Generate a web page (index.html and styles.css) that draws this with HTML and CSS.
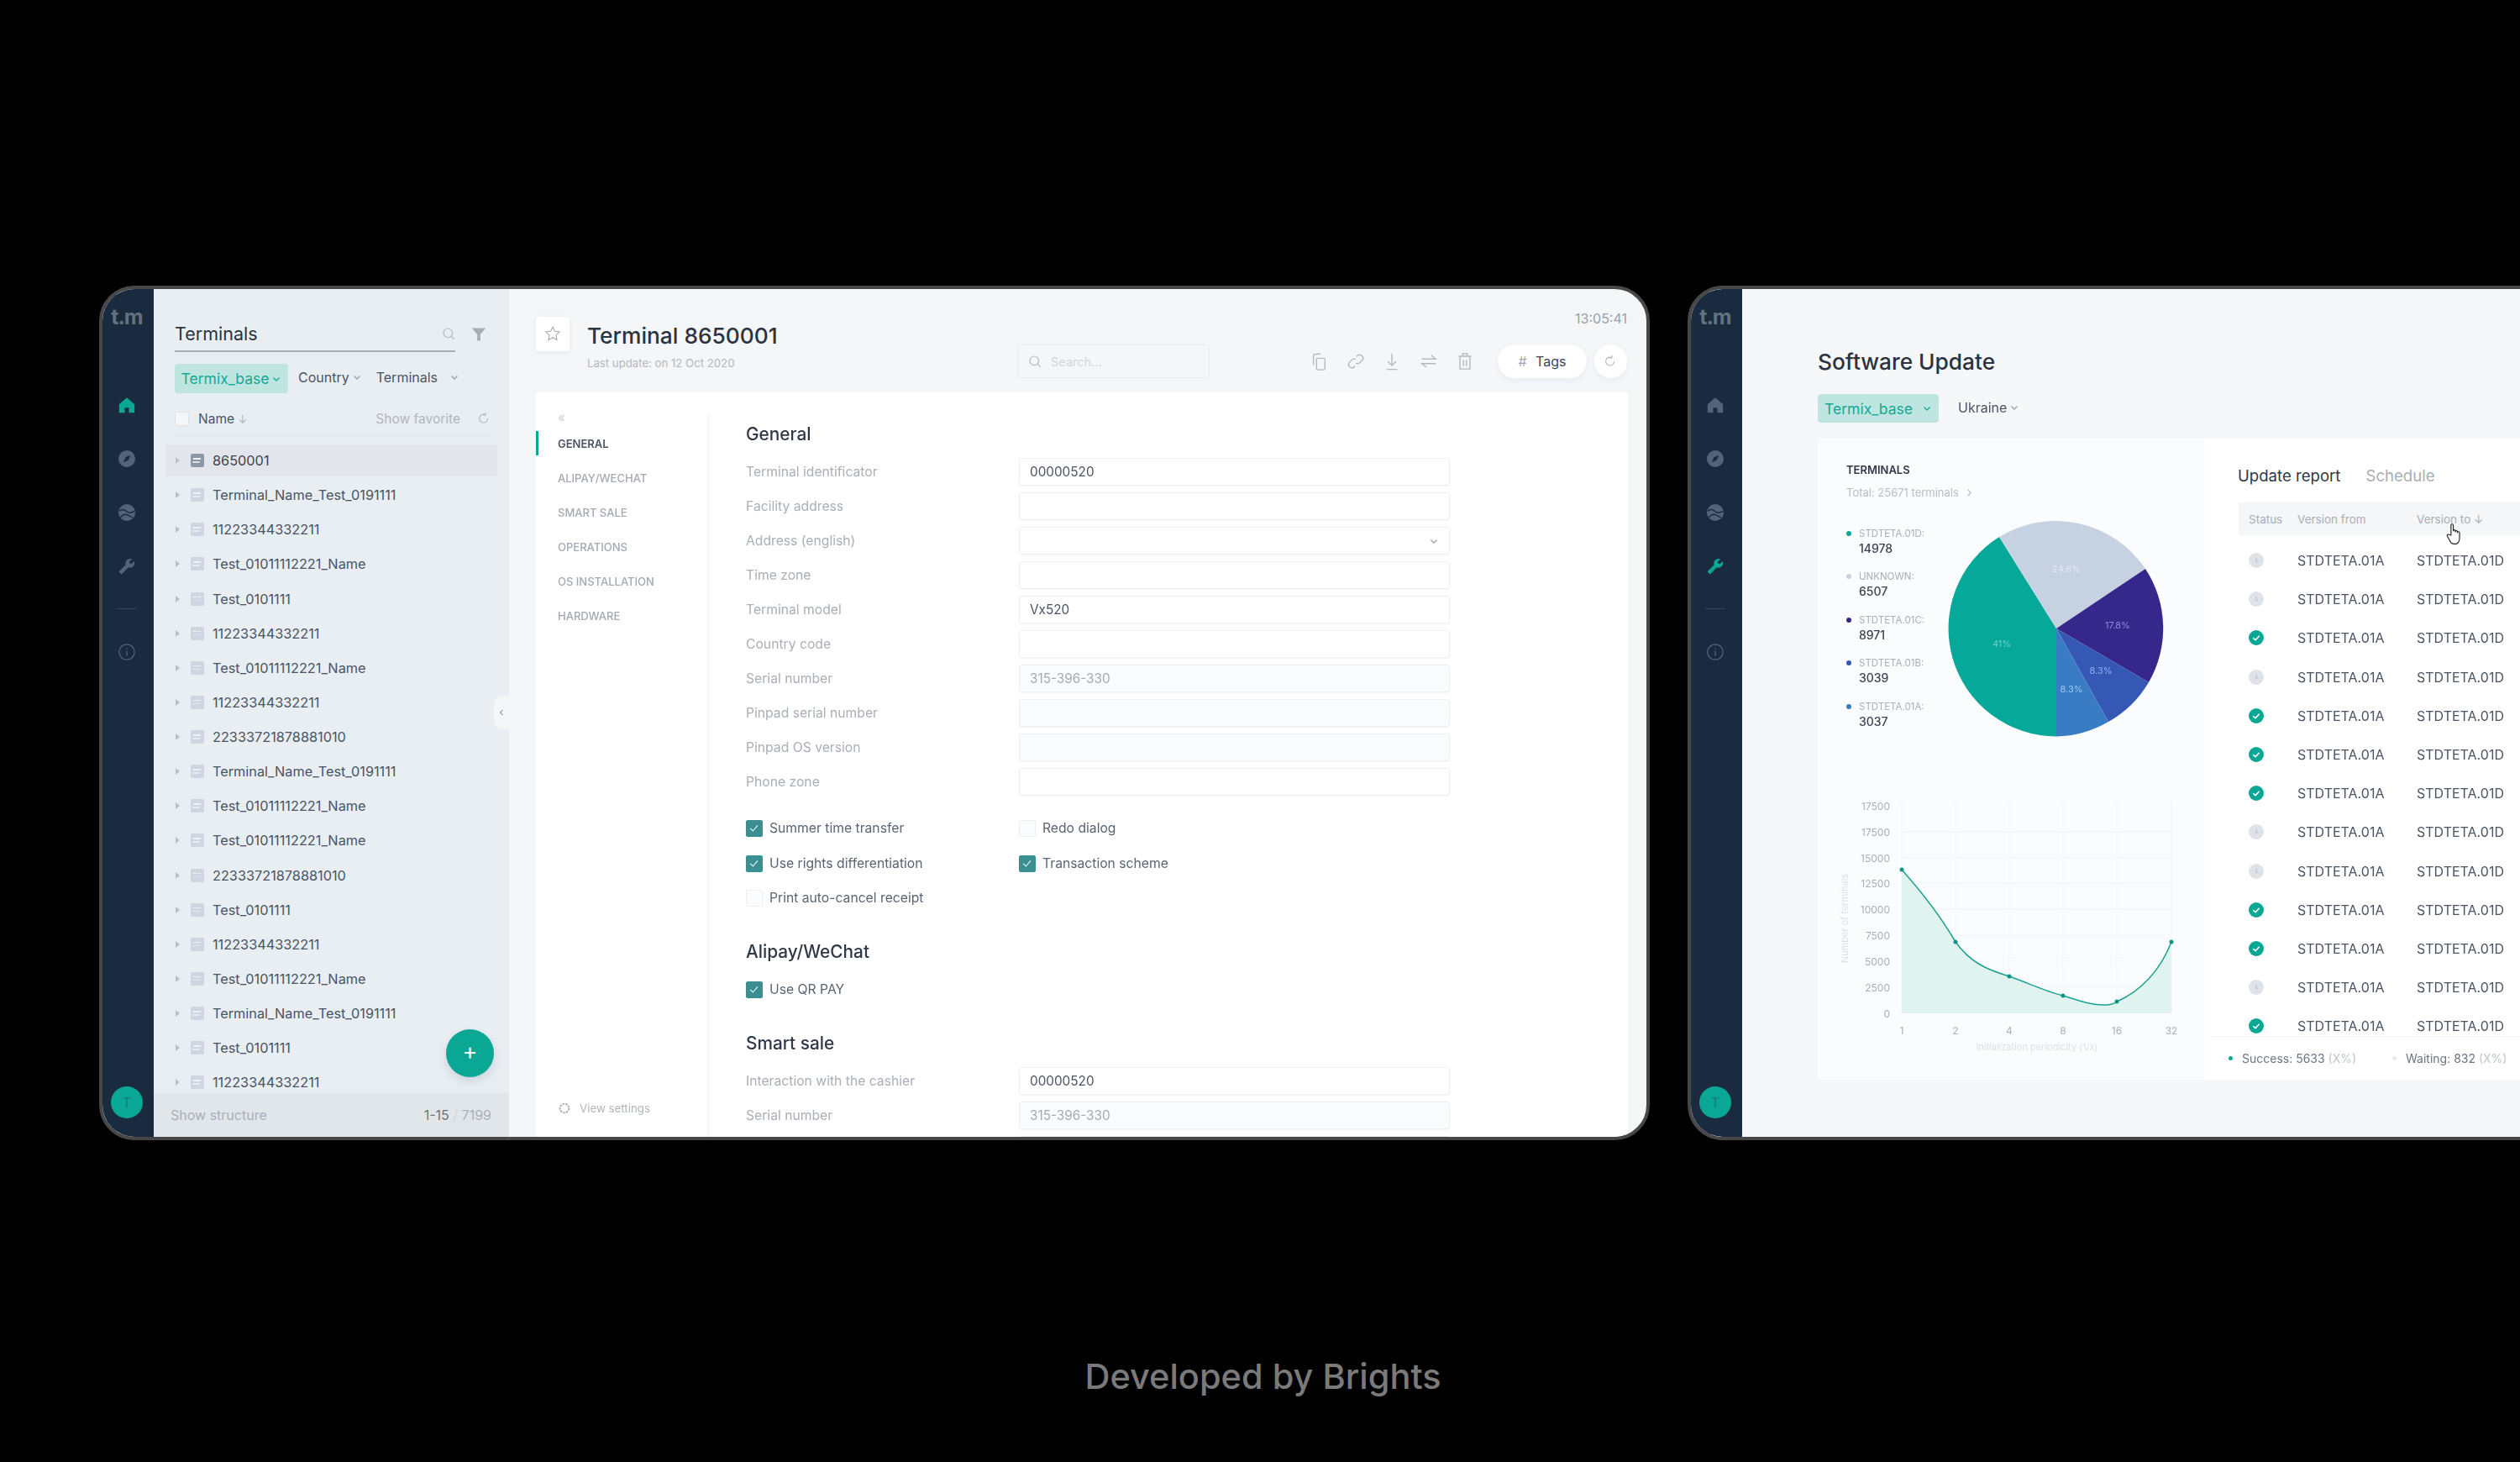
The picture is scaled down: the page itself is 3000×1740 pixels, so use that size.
FILE: index.html
```html
<!DOCTYPE html>
<html lang="en">
<head>
    <meta charset="UTF-8">
    <title>Termix - Developed by Brights</title>
    <link rel="stylesheet" href="styles.css">
</head>
<body>
    <svg class="sprite" width="0" height="0">
        <symbol id="i-home" viewBox="0 0 24 24"><path d="M12 1.5 23 11v12H15v-7H9v7H1V11z" fill="currentColor"/></symbol>
        <symbol id="i-compass" viewBox="0 0 24 24"><circle cx="12" cy="12" r="12" fill="currentColor"/><path d="M17 7l-3 7-7 3 3-7z" fill="#1a2b40"/></symbol>
        <symbol id="i-globe" viewBox="0 0 24 24"><circle cx="12" cy="12" r="12" fill="currentColor"/><path d="M1 10c4-3 7-3 10 0s7 3 12 0M3 19c3-4 6-5 9-4s5 3 8 4" fill="none" stroke="#1a2b40" stroke-width="1.6"/></symbol>
        <symbol id="i-wrench" viewBox="0 0 24 24"><path transform="matrix(-1 0 0 1 24 0)" d="M22.7 19l-9.1-9.1c.9-2.3.4-5-1.5-6.9-2-2-5-2.4-7.4-1.3L9 6 6 9 1.6 4.7C.4 7.1.9 10.1 2.9 12.1c1.9 1.9 4.6 2.4 6.9 1.5l9.1 9.1c.4.4 1 .4 1.4 0l2.3-2.3c.5-.4.5-1.1.1-1.4z" fill="currentColor"/></symbol>
        <symbol id="i-info" viewBox="0 0 24 24"><circle cx="12" cy="12" r="11" fill="none" stroke="currentColor" stroke-width="1.5"/><path d="M12 10.5V17.5M12 6.5v1.6" stroke="currentColor" stroke-width="1.6" fill="none"/></symbol>
        <symbol id="i-search" viewBox="0 0 24 24"><circle cx="11" cy="11" r="8" fill="none" stroke="currentColor" stroke-width="1.8"/><path d="M17 17l5 5" stroke="currentColor" stroke-width="1.8"/></symbol>
        <symbol id="i-chev" viewBox="0 0 12 12"><path d="M2.5 4.5 6 8l3.5-3.5" fill="none" stroke="currentColor" stroke-width="1.4"/></symbol>
        <symbol id="i-refresh" viewBox="0 0 24 24"><path d="M19 12a7.5 7.5 0 1 1-4-6.6M15 1.5v4.5h-4.5" fill="none" stroke="currentColor" stroke-width="1.7"/></symbol>
        <symbol id="i-copy" viewBox="0 0 24 24"><rect x="9" y="8" width="11" height="15" rx="2" fill="none" stroke="currentColor" stroke-width="1.5"/><path d="M9 3H7a2 2 0 0 0-2 2v12" fill="none" stroke="currentColor" stroke-width="1.5"/><path d="M9 2.5h5" stroke="currentColor" stroke-width="1.5"/></symbol>
        <symbol id="i-link" viewBox="0 0 24 24"><path d="M13 6l2-2a4.5 4.5 0 0 1 6 6l-4 4a4.5 4.5 0 0 1-5 .5M11 18l-2 2a4.5 4.5 0 0 1-6-6l4-4a4.5 4.5 0 0 1 5-.5" fill="none" stroke="currentColor" stroke-width="1.5"/></symbol>
        <symbol id="i-down" viewBox="0 0 24 24"><path d="M12 2v15M6.5 12l5.5 5.5 5.5-5.5M5 22.5h14" fill="none" stroke="currentColor" stroke-width="1.5"/></symbol>
        <symbol id="i-swap" viewBox="0 0 24 24"><path d="M3 9h18l-6-5M21 15H3l6 5" fill="none" stroke="currentColor" stroke-width="1.5"/></symbol>
        <symbol id="i-trash" viewBox="0 0 24 24"><path d="M4 5.5h16M9 5V2h6v3M5.5 5.5V22h13V5.5M10 10v8M14 10v8" fill="none" stroke="currentColor" stroke-width="1.5"/></symbol>
        <symbol id="i-star" viewBox="0 0 24 24"><path d="M12 2.5l2.9 6.3 6.8.8-5 4.7 1.3 6.8-6-3.4-6 3.4 1.3-6.8-5-4.7 6.8-.8z" fill="none" stroke="currentColor" stroke-width="1.4"/></symbol>
        <symbol id="i-filter" viewBox="0 0 24 24"><path d="M1 2h22l-8.5 10v10h-5V12z" fill="currentColor"/></symbol>
        <symbol id="i-gear" viewBox="0 0 24 24"><circle cx="12" cy="12" r="8" fill="none" stroke="currentColor" stroke-width="3" stroke-dasharray="4 1.5"/></symbol>
        <symbol id="i-check" viewBox="0 0 20 20"><circle cx="10" cy="10" r="10" fill="#0ba795"/><path d="M6 10.5l3 2.5 5-5.5" fill="none" stroke="#fff" stroke-width="1.8"/></symbol>
        <symbol id="i-clock" viewBox="0 0 20 20"><circle cx="10" cy="10" r="10" fill="#dfe2e6"/><path d="M10 6.5v5h2.5" fill="none" stroke="#c2c7cd" stroke-width="1.4"/></symbol>
    </svg>

    <div class="devices">
        <!-- terminal details screen -->
        <section class="device device-terminals">
            <aside class="rail">
                <div class="rail-logo">t.m</div>
                <svg class="rail-icon active"><use href="#i-home"/></svg>
                <svg class="rail-icon"><use href="#i-compass"/></svg>
                <svg class="rail-icon"><use href="#i-globe"/></svg>
                <svg class="rail-icon"><use href="#i-wrench"/></svg>
                <div class="rail-line"></div>
                <svg class="rail-icon"><use href="#i-info"/></svg>
                <div class="avatar">T</div>
            </aside>

            <div class="panel">
                <div class="panel-title">
                    <div class="panel-title-box">
                        <span>Terminals</span>
                        <svg class="ico-16"><use href="#i-search"/></svg>
                    </div>
                    <svg class="ico-filter"><use href="#i-filter"/></svg>
                </div>
                <div class="filters">
                    <div class="pill">Termix_base<svg class="chev"><use href="#i-chev"/></svg></div>
                    <div class="select select-country">Country<svg class="chev"><use href="#i-chev"/></svg></div>
                    <div class="select">Terminals<svg class="chev chev-far"><use href="#i-chev"/></svg></div>
                </div>
                <div class="list-head">
                    <span class="box"></span>
                    <span class="list-name">Name <em>&#8595;</em></span>
                    <span class="list-fav">Show favorite</span>
                    <svg class="ico-16"><use href="#i-refresh"/></svg>
                </div>
                <ul class="rows">
                    <li class="row selected"><i class="caret"></i><i class="doc"></i>8650001</li>
                    <li class="row"><i class="caret"></i><i class="doc"></i>Terminal_Name_Test_0191111</li>
                    <li class="row"><i class="caret"></i><i class="doc"></i>11223344332211</li>
                    <li class="row"><i class="caret"></i><i class="doc"></i>Test_01011112221_Name</li>
                    <li class="row"><i class="caret"></i><i class="doc"></i>Test_0101111</li>
                    <li class="row"><i class="caret"></i><i class="doc"></i>11223344332211</li>
                    <li class="row"><i class="caret"></i><i class="doc"></i>Test_01011112221_Name</li>
                    <li class="row"><i class="caret"></i><i class="doc"></i>11223344332211</li>
                    <li class="row"><i class="caret"></i><i class="doc"></i>22333721878881010</li>
                    <li class="row"><i class="caret"></i><i class="doc"></i>Terminal_Name_Test_0191111</li>
                    <li class="row"><i class="caret"></i><i class="doc"></i>Test_01011112221_Name</li>
                    <li class="row"><i class="caret"></i><i class="doc"></i>Test_01011112221_Name</li>
                    <li class="row"><i class="caret"></i><i class="doc"></i>22333721878881010</li>
                    <li class="row"><i class="caret"></i><i class="doc"></i>Test_0101111</li>
                    <li class="row"><i class="caret"></i><i class="doc"></i>11223344332211</li>
                    <li class="row"><i class="caret"></i><i class="doc"></i>Test_01011112221_Name</li>
                    <li class="row"><i class="caret"></i><i class="doc"></i>Terminal_Name_Test_0191111</li>
                    <li class="row"><i class="caret"></i><i class="doc"></i>Test_0101111</li>
                    <li class="row"><i class="caret"></i><i class="doc"></i>11223344332211</li>
                </ul>
                <div class="panel-foot">
                    <span>Show structure</span>
                    <span class="count"><b>1-15</b> <s>/</s> 7199</span>
                </div>
                <div class="fab">+</div>
                <div class="collapse-tab"><svg viewBox="0 0 12 12"><path d="M7.5 3 4.5 6l3 3" fill="none" stroke="#9aa2ac" stroke-width="1.3"/></svg></div>
            </div>

            <main class="main">
                <header class="main-head">
                    <div class="star"><svg><use href="#i-star"/></svg></div>
                    <div class="head-text">
                        <h1>Terminal 8650001</h1>
                        <p>Last update: on 12 Oct 2020</p>
                    </div>
                    <div class="head-right">
                        <div class="clock">13:05:41</div>
                        <div class="toolbar">
                            <div class="search"><svg class="ico-16"><use href="#i-search"/></svg>Search...</div>
                            <div class="tools">
                                <svg><use href="#i-copy"/></svg>
                                <svg><use href="#i-link"/></svg>
                                <svg><use href="#i-down"/></svg>
                                <svg><use href="#i-swap"/></svg>
                                <svg><use href="#i-trash"/></svg>
                            </div>
                            <div class="tags"><span>#</span> Tags</div>
                            <div class="round-btn"><svg class="ico-16"><use href="#i-refresh"/></svg></div>
                        </div>
                    </div>
                </header>

                <div class="card">
                    <nav class="side-nav">
                        <div class="side-collapse">&laquo;</div>
                        <a class="current">GENERAL</a>
                        <a>ALIPAY/WECHAT</a>
                        <a>SMART SALE</a>
                        <a>OPERATIONS</a>
                        <a>OS INSTALLATION</a>
                        <a>HARDWARE</a>
                        <div class="view-settings"><svg><use href="#i-gear"/></svg>View settings</div>
                    </nav>
                    <div class="form">
                        <h2 class="first">General</h2>
                        <div class="fields">
                            <label>Terminal identificator</label><div class="input">00000520</div>
                            <label>Facility address</label><div class="input"></div>
                            <label>Address (english)</label><div class="input input-select"><svg class="chev"><use href="#i-chev"/></svg></div>
                            <label>Time zone</label><div class="input"></div>
                            <label>Terminal model</label><div class="input">Vx520</div>
                            <label>Country code</label><div class="input"></div>
                            <label>Serial number</label><div class="input off">315-396-330</div>
                            <label>Pinpad serial number</label><div class="input off"></div>
                            <label>Pinpad OS version</label><div class="input off"></div>
                            <label>Phone zone</label><div class="input"></div>
                        </div>
                        <div class="checks">
                            <div class="check on">Summer time transfer</div>
                            <div class="check">Redo dialog</div>
                            <div class="check on">Use rights differentiation</div>
                            <div class="check on">Transaction scheme</div>
                            <div class="check">Print auto-cancel receipt</div>
                        </div>
                        <h2>Alipay/WeChat</h2>
                        <div class="checks">
                            <div class="check on">Use QR PAY</div>
                        </div>
                        <h2>Smart sale</h2>
                        <div class="fields">
                            <label>Interaction with the cashier</label><div class="input">00000520</div>
                            <label>Serial number</label><div class="input off">315-396-330</div>
                            <label></label><div class="input off"></div>
                        </div>
                    </div>
                </div>
            </main>
        </section>

        <!-- software update screen -->
        <section class="device device-update">
            <aside class="rail">
                <div class="rail-logo">t.m</div>
                <svg class="rail-icon"><use href="#i-home"/></svg>
                <svg class="rail-icon"><use href="#i-compass"/></svg>
                <svg class="rail-icon"><use href="#i-globe"/></svg>
                <svg class="rail-icon active"><use href="#i-wrench"/></svg>
                <div class="rail-line"></div>
                <svg class="rail-icon"><use href="#i-info"/></svg>
                <div class="avatar">T</div>
            </aside>

            <main class="update">
                <h1>Software Update</h1>
                <div class="filters update-filters">
                    <div class="pill">Termix_base<svg class="chev"><use href="#i-chev"/></svg></div>
                    <div class="select">Ukraine<svg class="chev"><use href="#i-chev"/></svg></div>
                </div>
                <div class="update-cards">
                    <section class="stats">
                        <h3>TERMINALS</h3>
                        <p class="total">Total: 25671 terminals <span>&rsaquo;</span></p>
                        <div class="pie-row">
                            <ul class="legend">
                                <li><i class="c-teal"></i><span>STDTETA.01D:</span><b>14978</b></li>
                                <li><i class="c-grey"></i><span>UNKNOWN:</span><b>6507</b></li>
                                <li><i class="c-purple"></i><span>STDTETA.01C:</span><b>8971</b></li>
                                <li><i class="c-blue"></i><span>STDTETA.01B:</span><b>3039</b></li>
                                <li><i class="c-sky"></i><span>STDTETA.01A:</span><b>3037</b></li>
                            </ul>
                            <svg class="pie" viewBox="0 0 258 258">
                                <path d="M129 129V257.5A128.5 128.5 0 0 1 61 20z" fill="#05a899"/>
                                <path d="M129 129L61 20A128.5 128.5 0 0 1 235 58z" fill="#c6d1e2"/>
                                <path d="M129 129L235 58A128.5 128.5 0 0 1 239 193z" fill="#35288a"/>
                                <path d="M129 129L239 193A128.5 128.5 0 0 1 191 240z" fill="#3558b5"/>
                                <path d="M129 129L191 240A128.5 128.5 0 0 1 129 257.5z" fill="#3a7cc4"/>
                                <g class="pie-labels">
                                    <text x="141" y="62" fill="#e4e9f1">24.6%</text>
                                    <text x="202" y="129" fill="#8f86e0">17.8%</text>
                                    <text x="182" y="183" fill="#8fb0ee">8.3%</text>
                                    <text x="147" y="205" fill="#9cc8ef">8.3%</text>
                                    <text x="64" y="151" fill="#66d3c6">41%</text>
                                </g>
                            </svg>
                        </div>
                        <svg class="line-chart" viewBox="0 0 440 320">
                            <g class="grid">
                                <path d="M84 50H405M84 81H405M84 111H405M84 142H405M84 173H405M84 204H405M84 235H405"/>
                                <path d="M84 13V266M148 13V266M212 13V266M276 13V266M340 13V266M405 13V266"/>
                            </g>
                            <path d="M84 95C108 122 130 150 148 181C165 205 185 214 212 222C235 230 255 240 276 245C295 251 312 257 328 256C334 255.5 338 254 340 252C368 240 392 215 405 181V266H84Z" fill="#dff3ef"/>
                            <path d="M84 95C108 122 130 150 148 181C165 205 185 214 212 222C235 230 255 240 276 245C295 251 312 257 328 256C334 255.5 338 254 340 252C368 240 392 215 405 181" fill="none" stroke="#1aa28f" stroke-width="1.5"/>
                            <g fill="#0f9583">
                                <circle cx="84" cy="95" r="2.5"/><circle cx="148" cy="181" r="2.5"/><circle cx="212" cy="222" r="2.5"/>
                                <circle cx="276" cy="245" r="2.5"/><circle cx="340" cy="252" r="2.5"/><circle cx="405" cy="181" r="2.5"/>
                            </g>
                            <g class="y-labels">
                                <text x="70" y="24">17500</text><text x="70" y="55">17500</text><text x="70" y="86">15000</text>
                                <text x="70" y="116">12500</text><text x="70" y="147">10000</text><text x="70" y="178">7500</text>
                                <text x="70" y="209">5000</text><text x="70" y="240">2500</text><text x="70" y="271">0</text>
                            </g>
                            <g class="x-labels">
                                <text x="84" y="291">1</text><text x="148" y="291">2</text><text x="212" y="291">4</text>
                                <text x="276" y="291">8</text><text x="340" y="291">16</text><text x="405" y="291">32</text>
                            </g>
                            <text class="axis-title" x="245" y="310">Initialization periodicity (1/x)</text>
                            <text class="axis-title" transform="translate(20 153) rotate(-90)">Number of terminals</text>
                        </svg>
                    </section>

                    <section class="report">
                        <div class="tabs"><span class="tab-on">Update report</span><span>Schedule</span></div>
                        <div class="table-head">
                            <span>Status</span><span>Version from</span><span>Version to &#8595;</span>
                            <svg class="hand" viewBox="0 0 20 26"><path d="M6.5 14.5V3a1.3 1.3 0 0 1 2.6 0V9.5a1.2 1.2 0 0 1 2.4 0v1a1.2 1.2 0 0 1 2.4 0v1a1.2 1.2 0 0 1 2.4 0V18c0 3.5-2 6.5-4.5 6.5H9.5c-2 0-3-1-4-3L2.2 15.5c-.8-1.5 1-2.6 2.2-1.5z" fill="#fff" stroke="#222" stroke-width="1.1" stroke-linejoin="round"/></svg>
                        </div>
                        <div class="table-body">
                            <div class="t-row"><svg><use href="#i-clock"/></svg><span>STDTETA.01A</span><span>STDTETA.01D</span></div>
                            <div class="t-row"><svg><use href="#i-clock"/></svg><span>STDTETA.01A</span><span>STDTETA.01D</span></div>
                            <div class="t-row"><svg><use href="#i-check"/></svg><span>STDTETA.01A</span><span>STDTETA.01D</span></div>
                            <div class="t-row"><svg><use href="#i-clock"/></svg><span>STDTETA.01A</span><span>STDTETA.01D</span></div>
                            <div class="t-row"><svg><use href="#i-check"/></svg><span>STDTETA.01A</span><span>STDTETA.01D</span></div>
                            <div class="t-row"><svg><use href="#i-check"/></svg><span>STDTETA.01A</span><span>STDTETA.01D</span></div>
                            <div class="t-row"><svg><use href="#i-check"/></svg><span>STDTETA.01A</span><span>STDTETA.01D</span></div>
                            <div class="t-row"><svg><use href="#i-clock"/></svg><span>STDTETA.01A</span><span>STDTETA.01D</span></div>
                            <div class="t-row"><svg><use href="#i-clock"/></svg><span>STDTETA.01A</span><span>STDTETA.01D</span></div>
                            <div class="t-row"><svg><use href="#i-check"/></svg><span>STDTETA.01A</span><span>STDTETA.01D</span></div>
                            <div class="t-row"><svg><use href="#i-check"/></svg><span>STDTETA.01A</span><span>STDTETA.01D</span></div>
                            <div class="t-row"><svg><use href="#i-clock"/></svg><span>STDTETA.01A</span><span>STDTETA.01D</span></div>
                            <div class="t-row"><svg><use href="#i-check"/></svg><span>STDTETA.01A</span><span>STDTETA.01D</span></div>
                        </div>
                        <div class="report-foot">
                            <i class="dot-ok"></i><span class="foot-ok">Success: 5633 <em>(X%)</em></span>
                            <i class="dot-wait"></i><span>Waiting: 832 <em>(X%)</em></span>
                        </div>
                    </section>
                </div>
            </main>
        </section>
    </div>

    <div class="caption">Developed by Brights</div>
</body>
</html>
```

FILE: styles.css
```css
* {box-sizing: border-box;}

html, body {
    margin: 0;
    height: 1740px;
    overflow: hidden;
}

body {
    width: 3000px;
    background-color: #000;
    font-family: Inter, "Noto Sans", sans-serif;
    color: #4a5463;
}

h1, h2, h3, p, ul {
    margin: 0;
    padding: 0;
}

ul {list-style: none;}

.sprite {position: absolute;}

.devices {
    display: flex;
    gap: 45px;
    padding: 340px 0 0 118px;
    filter: blur(.5px);
}

.device {
    display: flex;
    flex: none;
    height: 1017px;
    border: 4px solid #474747;
    border-radius: 42px;
    overflow: hidden;
    background-color: #f4f6f8;
}

.device-terminals {width: 1846px;}
.device-update {width: 1100px;}

/* dark rail */
.rail {
    display: flex;
    flex-direction: column;
    align-items: center;
    flex: none;
    width: 61px;
    padding-right: 3px;
    background-color: #1a2b40;
    color: #53637a;
}

.rail-logo {
    margin-top: 18px;
    font-size: 25px;
    line-height: 30px;
    font-weight: 700;
    letter-spacing: -1px;
    color: #64717f;
}

.rail-icon {
    width: 20px;
    height: 20px;
    margin-top: 44px;
}

.rail-logo + .rail-icon {margin-top: 80px;}
.rail-icon.active {color: #0ba795;}

.rail-line {
    width: 24px;
    height: 1px;
    margin-top: 40px;
    background-color: #37475a;
}

.rail-line + .rail-icon {margin-top: 41px;}

.avatar {
    width: 38px;
    height: 38px;
    margin-top: auto;
    margin-bottom: 22px;
    border-radius: 50%;
    background-color: #0ba795;
    color: #0d7f78;
    font-size: 16px;
    line-height: 38px;
    text-align: center;
}

/* terminals list */
.panel {
    position: relative;
    display: flex;
    flex-direction: column;
    flex: none;
    width: 423px;
    background-color: #e9eef3;
}

.panel-title {
    display: flex;
    align-items: center;
    margin: 36px 0 0 25px;
}

.panel-title-box {
    display: flex;
    align-items: center;
    justify-content: space-between;
    width: 334px;
    height: 39px;
    padding-bottom: 4px;
    border-bottom: 2px solid #a9aeb6;
    font-size: 21.5px;
    color: #2a3340;
}

.ico-16 {
    width: 16px;
    height: 16px;
    color: #b3b9c1;
}

.ico-filter {
    width: 18px;
    height: 18px;
    margin: -4px 0 0 19px;
    color: #a8aeb6;
}

.filters {
    display: flex;
    align-items: center;
    margin: 14px 0 0 25px;
}

.pill {
    display: flex;
    align-items: center;
    justify-content: center;
    width: 135px;
    height: 35px;
    border-radius: 4px;
    background-color: #bfe5e0;
    color: #14a995;
    font-size: 17.5px;
}

.select {
    display: flex;
    align-items: center;
    margin-top: -3px;
    font-size: 16px;
    color: #4a5463;
}

.select-country {margin: -3px 17px 0 12px;}

.chev {
    width: 12px;
    height: 12px;
    margin-left: 3px;
    color: #9aa2ac;
}

.pill .chev {color: #14a995;}
.chev-far {margin-left: 14px;}

.list-head {
    display: flex;
    align-items: center;
    height: 29px;
    margin: 22px 22px 0 25px;
    padding: 0 0 12px;
    border-bottom: 1px solid #e1e6eb;
    font-size: 15.5px;
}

.box {
    width: 17px;
    height: 17px;
    border: 1px solid #dfe3e8;
    border-radius: 2px;
    background-color: #f4f6f8;
}

.list-name {margin-left: 11px;}
.list-name em {font-style: normal; color: #b0b6bf; font-size: 13px;}

.list-fav {
    margin: 0 20px 0 auto;
    color: #b1b6bd;
}

.rows {
    flex: 1;
    min-height: 0;
    margin-top: 10px;
    overflow: hidden;
}

.row {
    display: flex;
    align-items: center;
    height: 38px;
    margin: 0 14px 3.13px 15px;
    padding-left: 11px;
    font-size: 16.3px;
    color: #4a5463;
}

.row.selected {
    background-color: #e2e6ec;
    color: #3a4350;
}

.caret {
    width: 0;
    height: 0;
    border-left: 5px solid #b9bfc7;
    border-top: 4px solid transparent;
    border-bottom: 4px solid transparent;
}

.doc {
    position: relative;
    width: 16px;
    height: 16px;
    margin: 0 10px 0 13px;
    border-radius: 2px;
    background-color: #cfd5e1;
}

.doc::before {
    content: "";
    position: absolute;
    left: 3px;
    top: 5px;
    width: 9px;
    height: 1.5px;
    background-color: #eef1f5;
    box-shadow: -1px 4px 0 -0.2px #eef1f5;
}

.selected .doc {background-color: #8d97a8;}

.panel-foot {
    display: flex;
    align-items: center;
    justify-content: space-between;
    flex: none;
    height: 52px;
    padding: 0 21px 0 20px;
    background-color: #e1e6eb;
    color: #aab0b8;
    font-size: 16px;
}

.count b {font-weight: 400; color: #6b7480;}
.count s {text-decoration: none; color: #cfd4da;}

.fab {
    position: absolute;
    right: 18px;
    bottom: 71px;
    width: 57px;
    height: 57px;
    border-radius: 50%;
    background-color: #0ba795;
    box-shadow: 0 5px 12px rgba(30, 60, 70, .14);
    color: #fff;
    font-size: 27px;
    line-height: 54px;
    text-align: center;
}

.collapse-tab {
    position: absolute;
    right: 0;
    top: 484px;
    width: 18px;
    height: 40px;
    border-radius: 10px 0 0 10px;
    background-color: #f4f6f8;
}

.collapse-tab svg {
    width: 12px;
    height: 12px;
    margin: 14px 0 0 3px;
}

/* terminal details */
.main {
    display: flex;
    flex-direction: column;
    flex: 1;
    min-width: 0;
}

.main-head {
    display: flex;
    flex: none;
    height: 122px;
    padding: 25px 23px 0 32px;
}

.star {
    width: 40px;
    height: 41px;
    margin-top: 8px;
    padding: 10px;
    border-radius: 3px;
    background-color: #fff;
    box-shadow: 0 2px 6px rgba(40, 60, 90, .07);
    color: #a9afb7;
}

.star svg {width: 20px; height: 20px;}

.head-text {margin: 14px 0 0 21px;}

.head-text h1 {
    font-size: 26.3px;
    line-height: 34px;
    font-weight: 500;
    color: #2a3340;
}

.head-text p {
    margin-top: 6px;
    font-size: 13.2px;
    line-height: 18px;
    color: #b3b8c0;
}

.head-right {
    display: flex;
    flex-direction: column;
    align-items: flex-end;
    margin-left: auto;
}

.clock {
    height: 20px;
    margin-bottom: 21px;
    font-size: 16px;
    line-height: 20px;
    color: #9aa1aa;
}

.toolbar {
    display: flex;
    align-items: center;
    height: 40px;
}

.search {
    display: flex;
    align-items: center;
    gap: 11px;
    width: 229px;
    height: 40px;
    padding-left: 12px;
    border: 1px solid #e9ecef;
    border-radius: 3px;
    color: #d2d6db;
    font-size: 14.5px;
}

.tools {
    display: flex;
    gap: 21.5px;
    margin: 0 28px 0 119px;
    color: #b3b9c1;
}

.tools svg {width: 22px; height: 22px;}

.tags {
    width: 106px;
    height: 40px;
    margin-right: 9px;
    border-radius: 20px;
    background-color: #fff;
    box-shadow: 0 3px 8px rgba(40, 60, 90, .05);
    color: #3c4658;
    font-size: 16px;
    line-height: 40px;
    text-align: center;
}

.tags span {margin-right: 6px; color: #a2a8b1;}

.round-btn {
    width: 39px;
    height: 40px;
    padding: 12px 11px;
    border-radius: 20px;
    background-color: #fff;
    box-shadow: 0 3px 8px rgba(40, 60, 90, .05);
}

.card {
    display: flex;
    flex: 1;
    min-height: 0;
    margin: 0 22px 0 32px;
    border-radius: 5px 5px 0 0;
    background-color: #fff;
    overflow: hidden;
}

.side-nav {
    position: relative;
    display: flex;
    flex-direction: column;
    flex: none;
    width: 206px;
    margin-top: 27px;
    padding-left: 26px;
    border-right: 1px solid #eff1f4;
}

.side-collapse {
    height: 8px;
    margin-bottom: 6.5px;
    font-size: 15px;
    line-height: 8px;
    color: #c9cdd3;
}

.side-nav a {
    height: 41.1px;
    font-size: 13px;
    line-height: 41.1px;
    font-weight: 500;
    color: #a3a9b2;
}

.side-nav a.current {color: #4a5463; font-weight: 600;}

.side-nav a.current::before {
    content: "";
    position: absolute;
    left: 0;
    top: 20px;
    width: 3px;
    height: 29px;
    background-color: #0ba795;
}

.view-settings {
    display: flex;
    align-items: center;
    gap: 10px;
    margin-top: auto;
    margin-bottom: 26px;
    font-size: 13.3px;
    color: #b1b6bd;
}

.view-settings svg {width: 16px; height: 16px;}

.form {
    flex: 1;
    min-width: 0;
    padding: 6.5px 0 0 44px;
    overflow: hidden;
}

.form h2 {
    height: 28px;
    margin: 30.5px 0 9.5px;
    font-size: 20.8px;
    line-height: 28px;
    font-weight: 500;
    color: #2f3846;
}

.fields {
    display: grid;
    grid-template-columns: 325px 513px;
    grid-auto-rows: 41.1px;
    align-items: center;
}

.fields label {
    font-size: 15.7px;
    color: #a9afb7;
}

.input {
    position: relative;
    height: 33px;
    padding-left: 12px;
    border: 1px solid #edeff2;
    border-radius: 3px;
    box-shadow: 0 1px 2px rgba(40, 60, 90, .05);
    font-size: 15.3px;
    line-height: 31px;
    color: #4a5463;
}

.input.off {
    background-color: #fafbfc;
    color: #a5abb3;
}

.input-select .chev {
    position: absolute;
    right: 12px;
    top: 10px;
}

.checks {
    display: grid;
    grid-template-columns: 325px 513px;
    grid-auto-rows: 41.1px;
    align-items: center;
}

.fields + .checks {margin-top: 14px;}

.check {
    position: relative;
    padding-left: 28px;
    font-size: 15.7px;
    color: #5a6472;
}

.check::before {
    content: "";
    position: absolute;
    left: 0;
    top: 0;
    width: 18px;
    height: 18px;
    border: 1px solid #edeff2;
    border-radius: 2px;
    background-color: #fbfcfd;
}

.check.on::before {
    border-color: #3a8f90;
    background-color: #3a8f90;
}

.check.on::after {
    content: "";
    position: absolute;
    left: 7px;
    top: 4px;
    width: 4px;
    height: 8px;
    border: solid #fff;
    border-width: 0 1.5px 1.5px 0;
    transform: rotate(40deg);
}

/* software update */
.update {
    flex: 1;
    min-width: 0;
    padding: 70px 0 0 90px;
    background-color: #f5f7f9;
}

.update h1 {
    font-size: 26.3px;
    line-height: 34px;
    font-weight: 500;
    color: #2a3340;
}

.update-filters {margin: 21px 0 0;}

.update-filters .pill {
    width: 144px;
    height: 34px;
    gap: 8px;
}

.update-filters .select {margin-left: 23px;}

.update-cards {
    display: flex;
    height: 763px;
    margin-top: 19px;
}

.stats {
    flex: none;
    width: 461px;
    padding: 29px 0 0 34px;
    background-color: #fbfcfe;
}

.stats h3 {
    font-size: 13px;
    line-height: 16px;
    font-weight: 600;
    color: #2f3846;
}

.total {
    margin-top: 10px;
    height: 16px;
    font-size: 13px;
    line-height: 16px;
    color: #b8bdc4;
}

.total span {margin-left: 6px; font-size: 16px;}

.pie-row {
    display: flex;
    margin-top: 26px;
}

.legend {
    flex: none;
    width: 121px;
    padding-top: 9px;
}

.legend li {
    position: relative;
    height: 51.4px;
    padding-left: 15px;
}

.legend i {
    position: absolute;
    left: 0;
    top: 4px;
    width: 6px;
    height: 6px;
    border-radius: 50%;
}

.legend span {
    display: block;
    font-size: 11.5px;
    line-height: 14px;
    color: #a9afb7;
}

.legend b {
    display: block;
    margin-top: 2px;
    font-size: 14px;
    line-height: 18px;
    font-weight: 500;
    color: #3a4350;
}

.c-teal {background-color: #05a899;}
.c-grey {background-color: #c6d1e2;}
.c-purple {background-color: #35288a;}
.c-blue {background-color: #3558b5;}
.c-sky {background-color: #3a7cc4;}

.pie {
    flex: none;
    width: 258px;
    height: 258px;
}

.pie-labels text {
    font-size: 11px;
    text-anchor: middle;
}

.line-chart {
    display: block;
    width: 440px;
    height: 320px;
    margin: 55px 0 0 -18px;
}

.grid path {
    fill: none;
    stroke: #f1f3f6;
    stroke-width: 1;
}

.line-chart text {
    font-size: 12px;
    fill: #a9afb7;
}

.y-labels text {text-anchor: end;}
.x-labels text {text-anchor: middle;}

.line-chart .axis-title {
    font-size: 11px;
    fill: #dde0e5;
    text-anchor: middle;
}

.report {
    display: flex;
    flex-direction: column;
    flex: 1;
    min-width: 0;
    background-color: #fff;
}

.tabs {
    display: flex;
    gap: 30px;
    margin: 33px 0 0 39px;
    font-size: 18.6px;
    line-height: 22px;
    color: #a8aeb6;
}

.tab-on {color: #2f3846;}

.table-head {
    position: relative;
    display: grid;
    grid-template-columns: 58px 142px 1fr;
    align-items: center;
    flex: none;
    height: 39px;
    margin: 21px 0 0 40px;
    padding-left: 12px;
    background-color: #f4f6f8;
    font-size: 13.5px;
    color: #a9afb7;
}

.hand {
    position: absolute;
    left: 246px;
    top: 24px;
    width: 21px;
    height: 27px;
}

.table-body {
    flex: none;
    height: 589px;
    margin: 7px 0 0 40px;
    padding-left: 12px;
    overflow: hidden;
}

.t-row {
    display: grid;
    grid-template-columns: 58px 142px 1fr;
    align-items: center;
    height: 46.2px;
    font-size: 16px;
    color: #4a5463;
}

.t-row svg {width: 18px; height: 18px;}

.report-foot {
    display: flex;
    align-items: center;
    flex: 1;
    margin-left: 3px;
    padding: 0 0 0 25px;
    border-top: 1px solid #f2f4f6;
    font-size: 14px;
    color: #6d7581;
}

.report-foot em {font-style: normal; color: #c0c5cb;}

.dot-ok, .dot-wait {
    width: 5px;
    height: 5px;
    margin-right: 11px;
    border-radius: 50%;
    background-color: #0ba795;
}

.dot-wait {background-color: #e8eaed;}
.foot-ok {width: 179px;}

.caption {
    margin-top: 256px;
    padding-left: 7px;
    font-size: 41.5px;
    font-weight: 500;
    line-height: 50px;
    text-align: center;
    color: #7a7a7a;
}
```
